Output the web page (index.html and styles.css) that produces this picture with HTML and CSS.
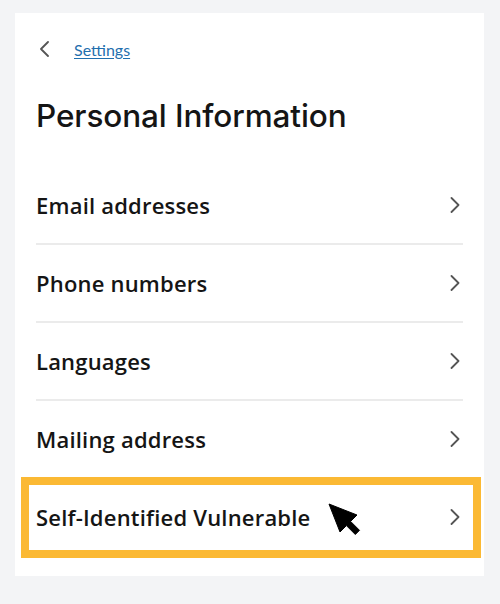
FILE: index.html
```html
<!DOCTYPE html>
<html lang="en">
<head>
<meta charset="utf-8">
<title>Personal Information</title>
<link rel="stylesheet" href="styles.css">
</head>
<body>
<main class="card">
  <nav class="nav">
    <svg class="back" width="12" height="16" viewBox="0 0 12 16" aria-hidden="true"><path d="M10 1 L3 8 L10 15" fill="none" stroke="#555" stroke-width="1.8" stroke-linecap="round" stroke-linejoin="round"/></svg>
    <a class="link" href="#">Settings</a>
  </nav>
  <h1 class="title">Personal Information</h1>
  <ul class="list">
    <li class="row"><span class="label">Email addresses</span><svg class="chev" width="12" height="16" viewBox="0 0 12 16"><path d="M3.5 1 L10.5 8 L3.5 15" fill="none" stroke="#555" stroke-width="1.8" stroke-linecap="round" stroke-linejoin="round"/></svg></li>
    <li class="row"><span class="label">Phone numbers</span><svg class="chev" width="12" height="16" viewBox="0 0 12 16"><path d="M3.5 1 L10.5 8 L3.5 15" fill="none" stroke="#555" stroke-width="1.8" stroke-linecap="round" stroke-linejoin="round"/></svg></li>
    <li class="row"><span class="label">Languages</span><svg class="chev" width="12" height="16" viewBox="0 0 12 16"><path d="M3.5 1 L10.5 8 L3.5 15" fill="none" stroke="#555" stroke-width="1.8" stroke-linecap="round" stroke-linejoin="round"/></svg></li>
    <li class="row"><span class="label">Mailing address</span><svg class="chev" width="12" height="16" viewBox="0 0 12 16"><path d="M3.5 1 L10.5 8 L3.5 15" fill="none" stroke="#555" stroke-width="1.8" stroke-linecap="round" stroke-linejoin="round"/></svg></li>
    <li class="row row-highlight"><span class="label">Self-Identified Vulnerable</span><svg class="chev" width="12" height="16" viewBox="0 0 12 16"><path d="M3.5 1 L10.5 8 L3.5 15" fill="none" stroke="#555" stroke-width="1.8" stroke-linecap="round" stroke-linejoin="round"/></svg>
      <svg class="cursor" width="34" height="34" viewBox="0 0 34 34" aria-hidden="true"><polygon points="1,1 29,12 22.6,18.4 31.5,27.3 27.3,31.5 18.4,22.6 12,29" fill="#000" stroke="#000" stroke-width="1" stroke-linejoin="round"/></svg>
    </li>
  </ul>
</main>
</body>
</html>
```

FILE: styles.css
```css
html, body {
  margin: 0;
  padding: 0;
}
body {
  background: #f3f4f6;
  width: 500px;
  height: 604px;
  overflow: hidden;
  color: #151515;
  font-family: "Lato", "Noto Sans", sans-serif;
}
.card {
  box-sizing: border-box;
  margin: 13px 0 0 15px;
  width: 469px;
  height: 563px;
  background: #fff;
  padding: 23px 21px 21px;
}
.nav {
  height: 26px;
  display: flex;
  align-items: center;
}
.back {
  margin-left: 2px;
  margin-right: 24px;
}
.link {
  color: #1f6fae;
  font-size: 16px;
  text-decoration: underline;
  text-underline-offset: 2px;
}
.title {
  margin: 34px 0 31px;
  font-family: "Inter", sans-serif;
  font-weight: 500;
  font-size: 31.5px;
  line-height: 40px;
  letter-spacing: -0.1px;
  color: #151515;
}
.list {
  list-style: none;
  margin: 0;
  padding: 0;
}
.row {
  height: 76px;
  display: flex;
  align-items: center;
  justify-content: space-between;
  border-bottom: 2px solid #ebebeb;
  position: relative;
}
.row:last-child {
  border-bottom: none;
}
.label {
  font-family: "Open Sans", "Noto Sans", sans-serif;
  font-size: 22px;
  font-weight: 600;
  line-height: 30px;
  letter-spacing: 0.2px;
  color: #151515;
}
.chev {
  margin-right: 3px;
}
.row-highlight::before {
  content: "";
  position: absolute;
  left: -15px;
  right: -18px;
  top: -2px;
  bottom: -3px;
  border: 8px solid #fbb934;
  pointer-events: none;
}
.cursor {
  position: absolute;
  left: 292px;
  top: 24px;
}
```
